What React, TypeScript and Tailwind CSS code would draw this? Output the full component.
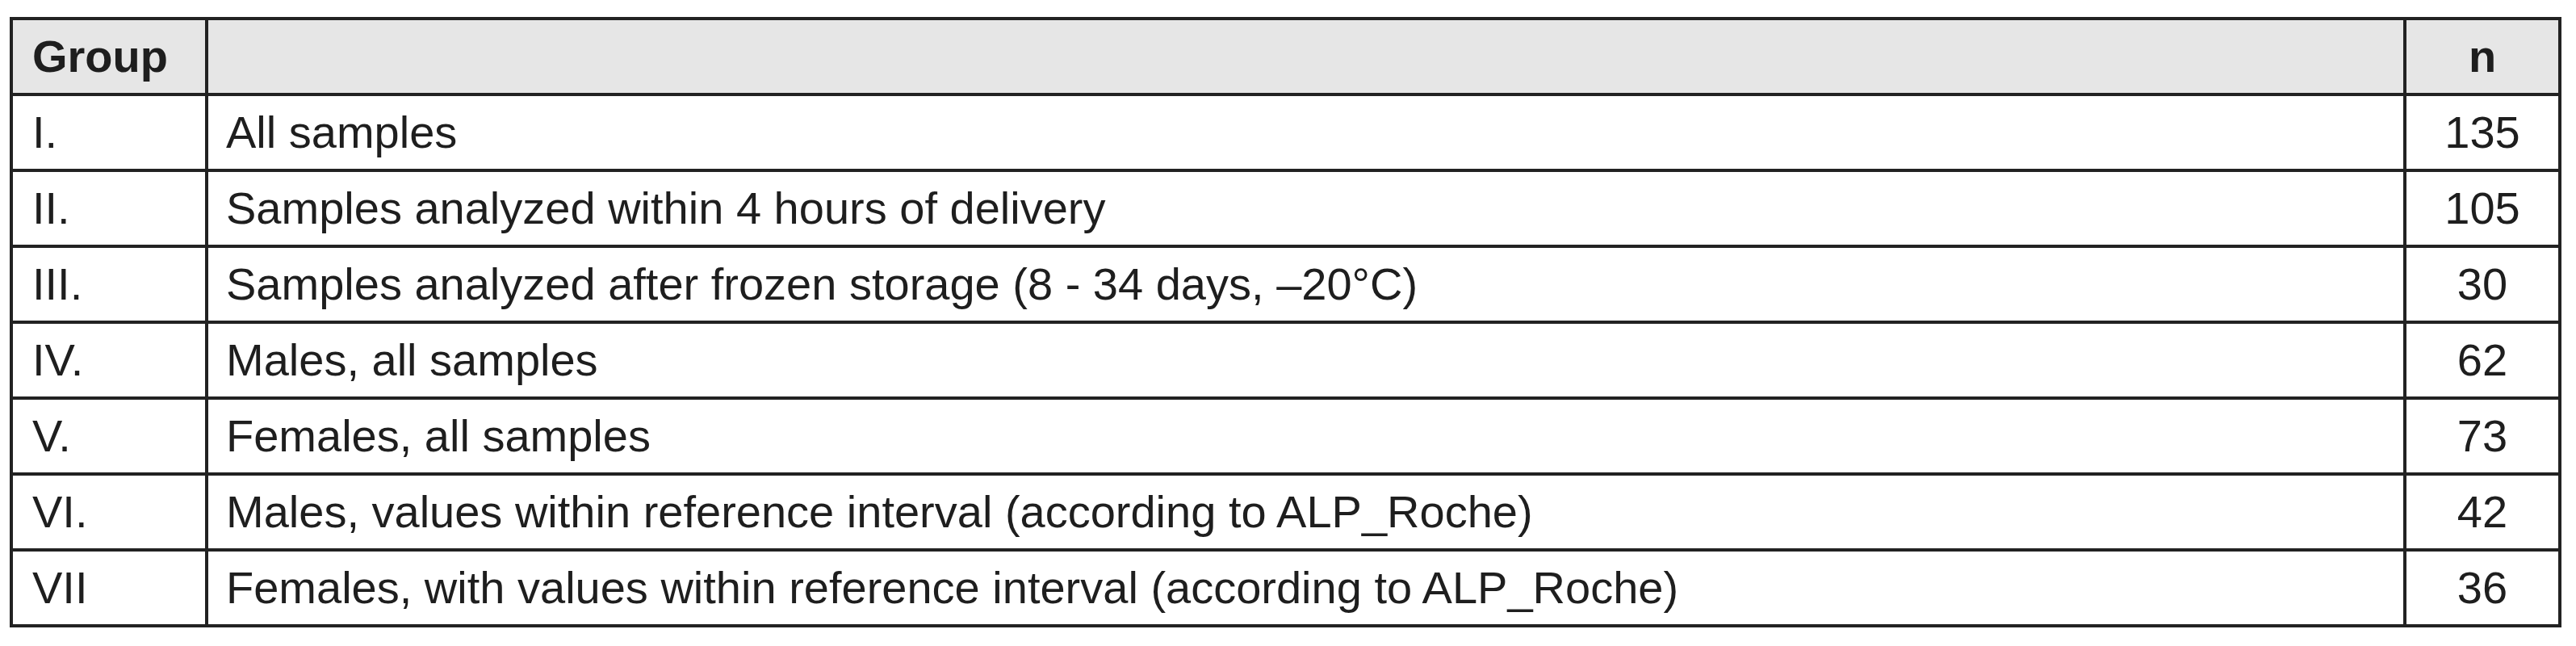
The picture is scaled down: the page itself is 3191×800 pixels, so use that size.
import React from 'react';

const rows = [
  { group: 'I.', label: 'All samples', n: '135' },
  { group: 'II.', label: 'Samples analyzed within 4 hours of delivery', n: '105' },
  { group: 'III.', label: 'Samples analyzed after frozen storage (8 - 34 days, \u201320\u00b0C)', n: '30' },
  { group: 'IV.', label: 'Males, all samples', n: '62' },
  { group: 'V.', label: 'Females, all samples', n: '73' },
  { group: 'VI.', label: 'Males, values within reference interval (according to ALP_Roche)', n: '42' },
  { group: 'VII', label: 'Females, with values within reference interval (according to ALP_Roche)', n: '36' },
];

const App: React.FC = () => {
  return (
    <div className="w-[3191px] h-[800px] bg-white pt-[21px] pl-[12px]" style={{ fontFamily: '"Liberation Sans", Arial, sans-serif' }}>
      <table className="w-[3161px] table-fixed border-collapse text-[56px] text-[#1e1e1e]">
        <colgroup>
          <col className="w-[242px]" />
          <col />
          <col className="w-[192px]" />
        </colgroup>
        <thead>
          {/* Header row */}
          <tr className="bg-[#e6e6e6]">
            <th className="h-[94px] border-4 border-[#222] pl-[24px] text-left font-bold align-middle">Group</th>
            <th className="h-[94px] border-4 border-[#222]"></th>
            <th className="h-[94px] border-4 border-[#222] text-center font-bold align-middle">n</th>
          </tr>
        </thead>
        <tbody>
          {rows.map((row, index) => (
            <tr key={index}>
              <td className="h-[94px] border-4 border-[#222] pl-[24px] align-middle">{row.group}</td>
              <td className="h-[94px] border-4 border-[#222] pl-[22px] align-middle whitespace-nowrap">{row.label}</td>
              <td className="h-[94px] border-4 border-[#222] text-center align-middle">{row.n}</td>
            </tr>
          ))}
        </tbody>
      </table>
    </div>
  );
};

export default App;
